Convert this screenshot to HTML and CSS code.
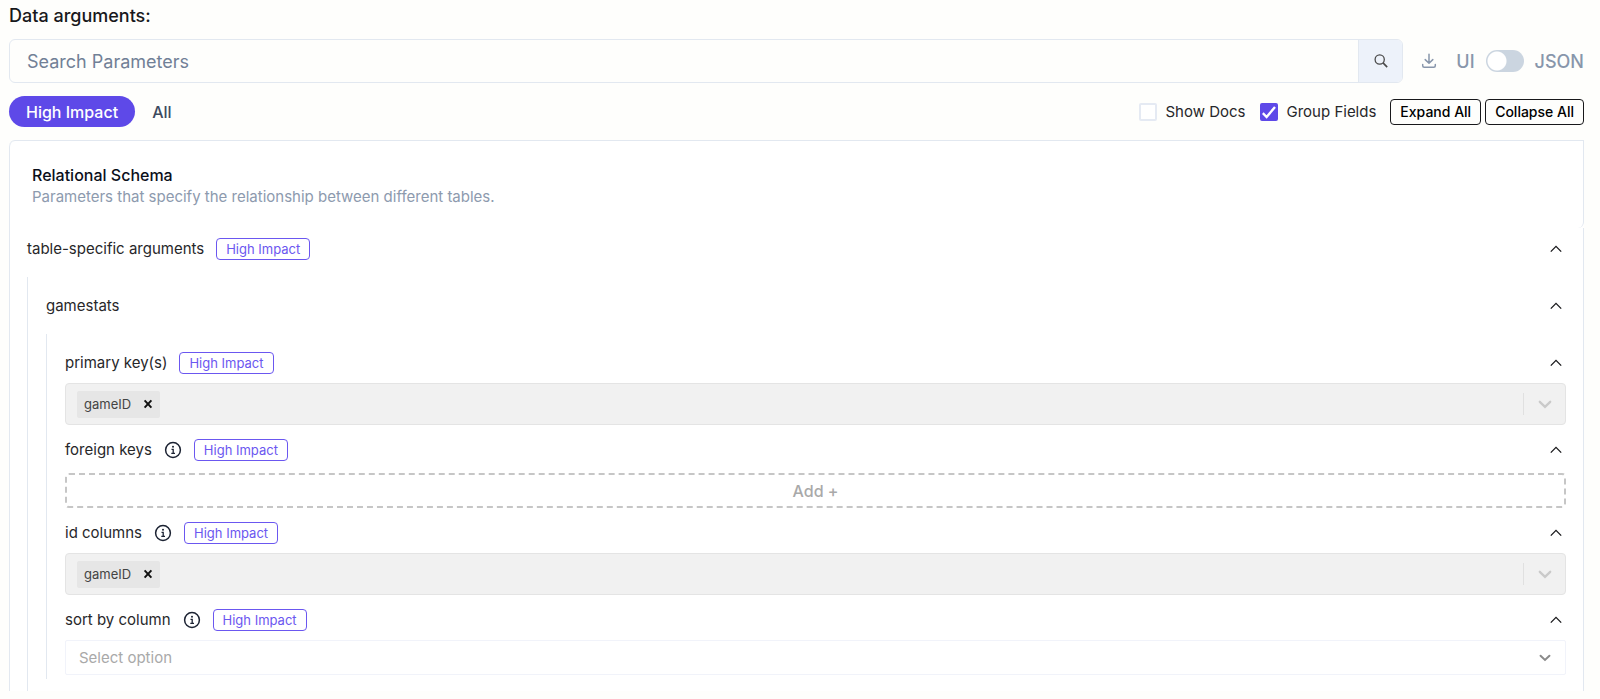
FILE: index.html
```
<!DOCTYPE html>
<html lang="en">

<head>
    <meta charset="UTF-8">
    <meta name="viewport" content="width=device-width, initial-scale=1.0">
    <title>Data arguments</title>
    <link rel="stylesheet" href="styles.css">
</head>

<body>
    <!-- shared icons -->
    <svg class="sprite" aria-hidden="true">
        <symbol id="icon-up" viewBox="0 0 12 8">
            <path d="M0.8 6.6 L6 1.4 L11.2 6.6" fill="none" stroke="currentColor" stroke-width="1.3" />
        </symbol>
        <symbol id="icon-down" viewBox="0 0 14 9">
            <path d="M1.8 1.8 L7 6.8 L12.2 1.8" fill="none" stroke="currentColor" stroke-width="2.3" stroke-linecap="round" />
        </symbol>
        <symbol id="icon-close" viewBox="0 0 10 10">
            <path d="M1.6 1.4 L8.4 8.6 M8.4 1.4 L1.6 8.6" fill="none" stroke="currentColor" stroke-width="2" />
        </symbol>
        <symbol id="icon-info" viewBox="0 0 18 18">
            <circle cx="9" cy="9" r="7.4" fill="none" stroke="currentColor" stroke-width="1.5" />
            <circle cx="9" cy="5.8" r="1" fill="currentColor" />
            <path d="M7.5 8.3 H9.2 V12.3 M7.3 12.3 H11" fill="none" stroke="currentColor" stroke-width="1.3" />
        </symbol>
    </svg>

    <main class="page">
        <h1 class="title">Data arguments:</h1>

        <div class="toolbar">
            <form class="search" role="search">
                <input class="search-input" type="text" placeholder="Search Parameters" aria-label="Search Parameters">
                <button class="search-btn" type="button" aria-label="Search">
                    <svg width="14" height="14" viewBox="0 0 14 14" fill="none" stroke="currentColor" stroke-width="1.3">
                        <circle cx="5.7" cy="5.5" r="4.6" />
                        <path d="M9 8.9 L13.2 13.1" stroke-width="1.6" />
                    </svg>
                </button>
            </form>
            <button class="download-btn" type="button" aria-label="Download">
                <svg width="16" height="16" viewBox="0 0 16 16" fill="none" stroke="currentColor" stroke-width="1.5" stroke-linecap="round" stroke-linejoin="round">
                    <path d="M8 1.2 V10 M4.2 6.6 L8 10.2 L11.8 6.6" />
                    <path d="M1.7 11.4 V12.8 Q1.7 14.3 3.2 14.3 H12.8 Q14.3 14.3 14.3 12.8 V11.4" />
                </svg>
            </button>
            <label class="mode">
                <span>UI</span>
                <input class="switch" type="checkbox" role="switch">
                <span>JSON</span>
            </label>
        </div>

        <div class="filters">
            <button class="pill active" type="button">High Impact</button>
            <button class="pill" type="button">All</button>
            <div class="options">
                <label class="check"><input type="checkbox">Show Docs</label>
                <label class="check"><input type="checkbox" checked>Group Fields</label>
                <div class="actions">
                    <button class="small-btn" type="button">Expand All</button>
                    <button class="small-btn" type="button">Collapse All</button>
                </div>
            </div>
        </div>

        <section class="panel">
            <header class="panel-head">
                <h2>Relational Schema</h2>
                <p>Parameters that specify the relationship between different tables.</p>
            </header>

            <div class="panel-body">
                <div class="row">
                    <span>table-specific arguments</span>
                    <span class="badge">High Impact</span>
                    <button class="toggle" type="button" aria-label="Toggle table-specific arguments"><svg width="12" height="8"><use href="#icon-up" /></svg></button>
                </div>

                <div class="nest">
                    <div class="row">
                        <span>gamestats</span>
                        <button class="toggle" type="button" aria-label="Toggle gamestats"><svg width="12" height="8"><use href="#icon-up" /></svg></button>
                    </div>

                    <div class="nest fields">
                        <div class="field">
                            <div class="row">
                                <span>primary key(s)</span>
                                <span class="badge">High Impact</span>
                                <button class="toggle" type="button" aria-label="Toggle primary key(s)"><svg width="12" height="8"><use href="#icon-up" /></svg></button>
                            </div>
                            <div class="multi">
                                <span class="tag">gameID<button type="button" aria-label="Remove gameID"><svg width="10" height="10"><use href="#icon-close" /></svg></button></span>
                                <button class="multi-open" type="button" aria-label="Open primary key(s)"><svg width="14" height="9"><use href="#icon-down" /></svg></button>
                            </div>
                        </div>

                        <div class="field">
                            <div class="row">
                                <span>foreign keys</span>
                                <svg class="info" width="18" height="18"><use href="#icon-info" /></svg>
                                <span class="badge">High Impact</span>
                                <button class="toggle" type="button" aria-label="Toggle foreign keys"><svg width="12" height="8"><use href="#icon-up" /></svg></button>
                            </div>
                            <button class="add-btn" type="button">Add +</button>
                        </div>

                        <div class="field">
                            <div class="row">
                                <span>id columns</span>
                                <svg class="info" width="18" height="18"><use href="#icon-info" /></svg>
                                <span class="badge">High Impact</span>
                                <button class="toggle" type="button" aria-label="Toggle id columns"><svg width="12" height="8"><use href="#icon-up" /></svg></button>
                            </div>
                            <div class="multi">
                                <span class="tag">gameID<button type="button" aria-label="Remove gameID"><svg width="10" height="10"><use href="#icon-close" /></svg></button></span>
                                <button class="multi-open" type="button" aria-label="Open id columns"><svg width="14" height="9"><use href="#icon-down" /></svg></button>
                            </div>
                        </div>

                        <div class="field">
                            <div class="row">
                                <label for="sortBy">sort by column</label>
                                <svg class="info" width="18" height="18"><use href="#icon-info" /></svg>
                                <span class="badge">High Impact</span>
                                <button class="toggle" type="button" aria-label="Toggle sort by column"><svg width="12" height="8"><use href="#icon-up" /></svg></button>
                            </div>
                            <div class="select">
                                <select id="sortBy">
                                    <option>Select option</option>
                                </select>
                                <svg width="12" height="8"><use href="#icon-down" /></svg>
                            </div>
                        </div>
                    </div>
                </div>
            </div>
        </section>
    </main>
</body>

</html>
```
FILE: styles.css
```
* {
    box-sizing: border-box;
}

body {
    margin: 0;
    background-color: #fefefc;
    color: #27272a;
    font-family: Inter, sans-serif;
    font-size: 15px;
}

button,
input,
select {
    margin: 0;
    font-family: inherit;
}

button {
    display: flex;
    align-items: center;
    justify-content: center;
    padding: 0;
    border: none;
    background: none;
    cursor: pointer;
}

.sprite {
    position: absolute;
    width: 0;
    height: 0;
}

.page {
    padding: 4px 16px 8px 9px;
}

.title {
    margin: 0 0 11px;
    font-size: 18px;
    line-height: 24px;
    font-weight: 500;
    color: #18181b;
}

/* search bar */
.toolbar {
    display: flex;
    align-items: center;
    margin-bottom: 13px;
}

.search {
    display: flex;
    flex: 1;
    height: 44px;
    border: 1px solid #e2e8f0;
    border-radius: 6px;
    overflow: hidden;
}

.search-input {
    flex: 1;
    min-width: 0;
    padding: 0 17px;
    border: none;
    outline: none;
    background: none;
    font-size: 18px;
}

.search-input::placeholder {
    color: #718096;
}

.search-btn {
    width: 44px;
    border-left: 1px solid #e2e8f0;
    background-color: #edf2fa;
    color: #4a4a4a;
}

.download-btn {
    width: 16px;
    margin: 0 19px 0 18px;
    color: #8896ab;
}

.mode {
    display: flex;
    align-items: center;
    gap: 11px;
    font-size: 18px;
    font-weight: 500;
    color: #8896ab;
}

.switch {
    appearance: none;
    width: 38px;
    height: 22px;
    border-radius: 11px;
    background: radial-gradient(circle at 11px 11px, #fff 9px, #cbd5e0 10px);
}

.switch:checked {
    background: radial-gradient(circle at 27px 11px, #fff 9px, #5e49e8 10px);
}

/* filters */
.filters {
    display: flex;
    align-items: center;
    margin-bottom: 13px;
}

.pill {
    height: 31px;
    padding: 0 17px;
    border-radius: 16px;
    font-size: 16px;
    font-weight: 500;
    color: #3d4a5f;
}

.pill.active {
    background-color: #5e49e8;
    color: #fff;
}

.options {
    display: flex;
    align-items: center;
    gap: 14px;
    margin-left: auto;
}

.check {
    display: flex;
    align-items: center;
    gap: 9px;
}

.check input {
    appearance: none;
    width: 18px;
    height: 18px;
    border: 2px solid #e5eaf3;
    border-radius: 2px;
    background-color: #fff;
}

.check input:checked {
    border-color: #5e49e8;
    background: #5e49e8 url("data:image/svg+xml,%3Csvg xmlns='http://www.w3.org/2000/svg' viewBox='0 0 14 14'%3E%3Cpath d='M0.8 8.2 L4.6 12 L13 2' fill='none' stroke='white' stroke-width='2.4'/%3E%3C/svg%3E") center no-repeat;
}

.actions {
    display: flex;
    gap: 4px;
}

.small-btn {
    height: 26px;
    padding: 0 9px;
    border: 1px solid #18181b;
    border-radius: 4px;
    font-size: 14px;
    font-weight: 500;
    color: #000;
}

/* parameters */
.panel {
    border: solid #e2e8f0;
    border-width: 1px 0 0;
    border-radius: 6px 0 0;
    background-color: #fff;
}

.panel-head {
    height: 87px;
    padding: 23px 22px 0;
    border: solid #e2e8f0;
    border-width: 0 1px;
    border-radius: 6px 0 6px 0;
}

.panel-head h2,
.panel-head p {
    margin: 0;
    line-height: 22px;
}

.panel-head h2 {
    font-size: 16px;
    font-weight: 500;
    color: #0b0f1a;
}

.panel-head p {
    font-size: 15px;
    color: #8d9aae;
}

.panel-body {
    padding: 0 17px;
    border: solid #e2e8f0;
    border-width: 0 1px;
}

.row {
    display: flex;
    align-items: center;
    gap: 12px;
    height: 41px;
}

.badge {
    padding: 0 9px;
    border: 1px solid #6b57f0;
    border-radius: 4px;
    font-size: 13px;
    line-height: 20px;
    color: #6b57f0;
}

.info {
    color: #1c2333;
}

.toggle {
    width: 20px;
    height: 20px;
    margin-left: auto;
    color: #18181b;
}

.nest {
    margin-top: 8px;
    padding: 8px 0 12px 18px;
    border-left: 1px solid #e2e8f0;
}

.fields {
    padding-bottom: 4px;
}

.field + .field {
    margin-top: 4px;
}

.multi {
    display: flex;
    align-items: center;
    height: 42px;
    padding-left: 11px;
    border: 1px solid #e4e4e4;
    border-radius: 4px;
    background-color: #f1f1f1;
}

.tag {
    display: flex;
    align-items: center;
    gap: 12px;
    height: 27px;
    padding: 0 7px;
    border-radius: 2px;
    background-color: #e6e6e6;
    font-size: 13px;
    color: #444;
}

.tag button {
    color: #111;
}

.multi-open {
    width: 42px;
    height: 22px;
    margin-left: auto;
    border-left: 1px solid #e0e0e0;
    color: #cacaca;
}

.add-btn {
    width: 100%;
    height: 35px;
    margin-top: 3px;
    border: 2px dashed #c6c6c6;
    border-radius: 4px;
    font-size: 16px;
    font-weight: 500;
    color: #a9a9a9;
}

.select {
    display: grid;
    align-items: center;
}

.select select,
.select svg {
    grid-area: 1 / 1;
}

.select select {
    appearance: none;
    width: 100%;
    height: 35px;
    padding: 0 40px 0 13px;
    border: 1px solid #f1f3fa;
    border-radius: 2px;
    background-color: #fff;
    font-size: 15px;
    color: #a9a9a9;
}

.select svg {
    justify-self: end;
    margin-right: 15px;
    color: #8a8a8a;
    pointer-events: none;
}
```
